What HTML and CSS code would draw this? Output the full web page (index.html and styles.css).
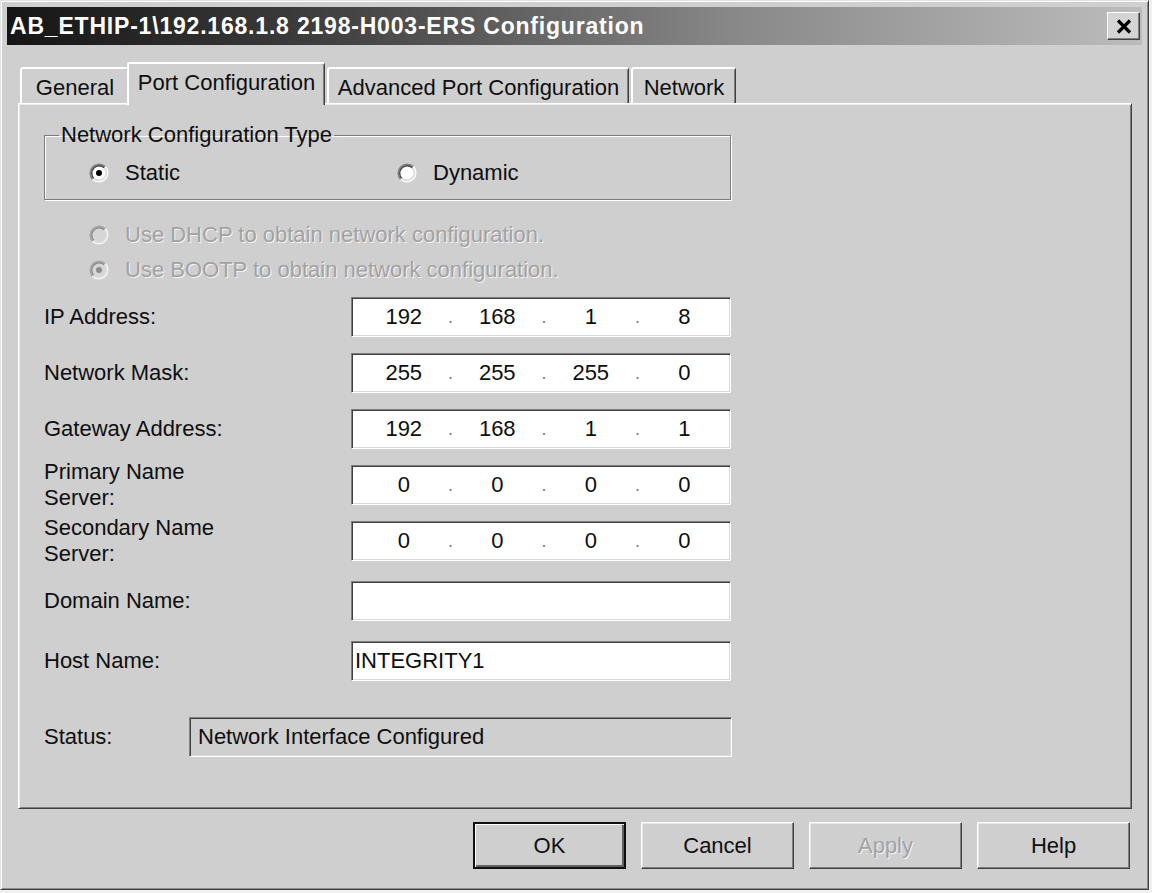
FILE: index.html
```html
<!DOCTYPE html>
<html>
<head>
<meta charset="utf-8">
<link rel="stylesheet" href="styles.css">
</head>
<body>
<div class="window">
  <div class="titlebar">
    <span class="title">AB_ETHIP-1\192.168.1.8 2198-H003-ERS Configuration</span>
    <div class="close">
      <svg width="18" height="15" viewBox="0 0 18 15"><path d="M3 1.5 L15 13.5 M15 1.5 L3 13.5" stroke="#000" stroke-width="3.2" fill="none"/></svg>
    </div>
  </div>
  <div class="body">
    <div class="tabs">
      <div class="tab tab-general">General</div>
      <div class="tab tab-port active">Port Configuration</div>
      <div class="tab tab-adv">Advanced Port Configuration</div>
      <div class="tab tab-net">Network</div>
    </div>
    <div class="panel">
      <fieldset class="group">
        <legend>Network Configuration Type</legend>
        <div class="options">
          <div class="opt opt-static">
            <svg class="radio" viewBox="0 0 20 20"><circle cx="10" cy="10" r="8" fill="#fff"/><path d="M3.64 16.36 A9 9 0 0 1 16.36 3.64" stroke="#808080" stroke-width="1.6" fill="none"/><path d="M16.36 3.64 A9 9 0 0 1 3.64 16.36" stroke="#fafafa" stroke-width="1.6" fill="none"/><path d="M4.7 15.3 A7.5 7.5 0 0 1 15.3 4.7" stroke="#404040" stroke-width="1.4" fill="none"/><path d="M15.3 4.7 A7.5 7.5 0 0 1 4.7 15.3" stroke="#d8d8d8" stroke-width="1.4" fill="none"/><circle cx="10" cy="10" r="3" fill="#000"/></svg>
            <span>Static</span>
          </div>
          <div class="opt">
            <svg class="radio" viewBox="0 0 20 20"><circle cx="10" cy="10" r="8" fill="#fff"/><path d="M3.64 16.36 A9 9 0 0 1 16.36 3.64" stroke="#808080" stroke-width="1.6" fill="none"/><path d="M16.36 3.64 A9 9 0 0 1 3.64 16.36" stroke="#fafafa" stroke-width="1.6" fill="none"/><path d="M4.7 15.3 A7.5 7.5 0 0 1 15.3 4.7" stroke="#404040" stroke-width="1.4" fill="none"/><path d="M15.3 4.7 A7.5 7.5 0 0 1 4.7 15.3" stroke="#d8d8d8" stroke-width="1.4" fill="none"/></svg>
            <span>Dynamic</span>
          </div>
        </div>
      </fieldset>

      <div class="boot">
        <div class="opt disabled">
          <svg class="radio" viewBox="0 0 20 20"><circle cx="10" cy="10" r="8" fill="#d6d6d6"/><path d="M3.64 16.36 A9 9 0 0 1 16.36 3.64" stroke="#a8a8a8" stroke-width="1.6" fill="none"/><path d="M16.36 3.64 A9 9 0 0 1 3.64 16.36" stroke="#f4f4f4" stroke-width="1.6" fill="none"/><path d="M4.7 15.3 A7.5 7.5 0 0 1 15.3 4.7" stroke="#8a8a8a" stroke-width="1.4" fill="none"/><path d="M15.3 4.7 A7.5 7.5 0 0 1 4.7 15.3" stroke="#dcdcdc" stroke-width="1.4" fill="none"/></svg>
          <span>Use DHCP to obtain network configuration.</span>
        </div>
        <div class="opt disabled">
          <svg class="radio" viewBox="0 0 20 20"><circle cx="10" cy="10" r="8" fill="#d6d6d6"/><path d="M3.64 16.36 A9 9 0 0 1 16.36 3.64" stroke="#a8a8a8" stroke-width="1.6" fill="none"/><path d="M16.36 3.64 A9 9 0 0 1 3.64 16.36" stroke="#f4f4f4" stroke-width="1.6" fill="none"/><path d="M4.7 15.3 A7.5 7.5 0 0 1 15.3 4.7" stroke="#8a8a8a" stroke-width="1.4" fill="none"/><path d="M15.3 4.7 A7.5 7.5 0 0 1 4.7 15.3" stroke="#dcdcdc" stroke-width="1.4" fill="none"/><circle cx="10" cy="10" r="3" fill="#8c8c8c"/></svg>
          <span>Use BOOTP to obtain network configuration.</span>
        </div>
      </div>

      <div class="form">
        <div class="label">IP Address:</div>
        <div class="field ip"><span>192</span><i>.</i><span>168</span><i>.</i><span>1</span><i>.</i><span>8</span></div>

        <div class="label">Network Mask:</div>
        <div class="field ip"><span>255</span><i>.</i><span>255</span><i>.</i><span>255</span><i>.</i><span>0</span></div>

        <div class="label">Gateway Address:</div>
        <div class="field ip"><span>192</span><i>.</i><span>168</span><i>.</i><span>1</span><i>.</i><span>1</span></div>

        <div class="label two">Primary Name<br>Server:</div>
        <div class="field ip"><span>0</span><i>.</i><span>0</span><i>.</i><span>0</span><i>.</i><span>0</span></div>

        <div class="label two">Secondary Name<br>Server:</div>
        <div class="field ip"><span>0</span><i>.</i><span>0</span><i>.</i><span>0</span><i>.</i><span>0</span></div>

        <div class="label spaced">Domain Name:</div>
        <div class="field spaced"></div>

        <div class="label spaced">Host Name:</div>
        <div class="field text spaced">INTEGRITY1</div>
      </div>

      <div class="status-row">
        <div class="status-label">Status:</div>
        <div class="field status">Network Interface Configured</div>
      </div>
    </div>

    <div class="buttons">
      <div class="btn default">OK</div>
      <div class="btn">Cancel</div>
      <div class="btn disabled">Apply</div>
      <div class="btn">Help</div>
    </div>
  </div>
</div>
</body>
</html>
```

FILE: styles.css
```css
html, body {
  margin: 0;
  padding: 0;
}
body {
  background: #f0f0f0;
  font-family: "Liberation Sans", Arial, sans-serif;
  font-size: 22px;
  color: #0e0e0e;
}
.window {
  width: 1149px;
  height: 890px;
  box-sizing: border-box;
  background: #cfcfcf;
  border: 1px solid;
  border-color: #e2e2e2 #404040 #404040 #e2e2e2;
  box-shadow: inset 1px 1px #ffffff, inset -1px -1px #8a8a8a;
  padding: 6px 6px 0 6px;
  display: flex;
  flex-direction: column;
}
.titlebar {
  height: 38px;
  background: linear-gradient(to right, #151515 0%, #3a3a3a 25%, #8a8a8a 65%, #bcbcbc 100%);
  display: flex;
  align-items: center;
  justify-content: space-between;
  padding-left: 3px;
  padding-right: 2px;
}
.title {
  color: #ffffff;
  font-weight: bold;
  font-size: 23px;
  letter-spacing: 0.8px;
  white-space: nowrap;
}
.close {
  width: 33px;
  height: 28px;
  box-sizing: border-box;
  background: #d4d4d4;
  border: 1px solid;
  border-color: #ffffff #404040 #404040 #ffffff;
  box-shadow: inset -1px -1px #808080;
  display: flex;
  align-items: center;
  justify-content: center;
}
.body {
  padding: 17px 10px 0 11px;
  display: flex;
  flex-direction: column;
}
.tabs {
  height: 41px;
  display: flex;
  align-items: flex-end;
  padding-left: 2px;
  position: relative;
  z-index: 2;
}
.tab {
  height: 36px;
  box-sizing: border-box;
  background: #cfcfcf;
  border-top: 2px solid #ffffff;
  border-left: 2px solid #ffffff;
  border-right: 1px solid #404040;
  box-shadow: inset -1px 0 #808080;
  border-radius: 3px 3px 0 0;
  display: flex;
  align-items: center;
  justify-content: center;
  padding-top: 3px;
  white-space: nowrap;
}
.tab-general { width: 109px; }
.tab-port { width: 198px; margin-left: -2px; }
.tab-adv { width: 302px; margin-left: 2px; }
.tab-net { width: 105px; margin-left: 2px; }
.tab.active {
  height: 43px;
  margin-bottom: -2px;
  padding-top: 0;
  padding-bottom: 4px;
  position: relative;
  z-index: 3;
}
.panel {
  height: 706px;
  box-sizing: border-box;
  border: 1px solid;
  border-color: #ffffff #404040 #404040 #ffffff;
  box-shadow: inset 1px 1px #ececec, inset -1px -1px #808080;
  padding: 19px 0 0 25px;
  position: relative;
  z-index: 1;
}
.group {
  width: 687px;
  box-sizing: border-box;
  margin: 0;
  border: 1px solid #7c7c7c;
  box-shadow: inset 1px 1px #ffffff, 1px 1px #ffffff;
  padding: 14px 0 14px 14px;
}
.group legend {
  padding: 0 2px;
  margin-left: 0;
  line-height: 24px;
}
.options {
  display: flex;
  padding-left: 30px;
}
.opt {
  display: flex;
  align-items: center;
  gap: 16px;
  height: 24px;
  line-height: 24px;
  white-space: nowrap;
}
.opt-static {
  width: 308px;
}
.radio {
  width: 20px;
  height: 20px;
  flex: none;
}
.opt.disabled span {
  color: #a2a2a2;
  text-shadow: 1px 1px 0 #f4f4f4;
}
.boot {
  margin-top: 23px;
  padding-left: 45px;
  display: flex;
  flex-direction: column;
  gap: 11px;
}
.form {
  margin-top: 15px;
  display: grid;
  grid-template-columns: 307px 380px;
  grid-auto-rows: auto;
  row-gap: 16px;
}
.label {
  height: 40px;
  display: flex;
  align-items: center;
  white-space: nowrap;
}
.label.two {
  line-height: 26px;
}
.spaced {
  margin-top: 4px;
}
.field {
  box-sizing: border-box;
  height: 40px;
  background: #ffffff;
  border: 1px solid;
  border-color: #808080 #ffffff #ffffff #808080;
  box-shadow: inset 1px 1px #404040, inset -1px -1px #dadada;
}
.field.ip {
  display: grid;
  grid-template-columns: 1fr 10px 1fr 10px 1fr 10px 1fr;
  align-items: center;
  padding: 0 4px 0 10px;
  text-align: center;
}
.field.ip i {
  font-style: normal;
  color: #7a7a7a;
  font-size: 18px;
}
.field.text {
  display: flex;
  align-items: center;
  padding-left: 3px;
}
.status-row {
  margin-top: 36px;
  display: flex;
  align-items: center;
}
.status-label {
  width: 145px;
}
.field.status {
  width: 543px;
  background: #cfcfcf;
  display: flex;
  align-items: center;
  padding-left: 8px;
}
.buttons {
  margin-top: 13px;
  display: flex;
  justify-content: flex-end;
  gap: 15px;
  padding-right: 2px;
}
.btn {
  width: 153px;
  height: 47px;
  box-sizing: border-box;
  background: #cfcfcf;
  border: 1px solid;
  border-color: #ffffff #404040 #404040 #ffffff;
  box-shadow: inset -1px -1px #808080, inset 1px 1px #e4e4e4;
  display: flex;
  align-items: center;
  justify-content: center;
}
.btn.default {
  border: 2px solid #101010;
  box-shadow: inset 1px 1px #ffffff, inset -2px -2px #606060;
}
.btn.disabled {
  color: #a2a2a2;
  text-shadow: 1px 1px 0 #f4f4f4;
}
```
